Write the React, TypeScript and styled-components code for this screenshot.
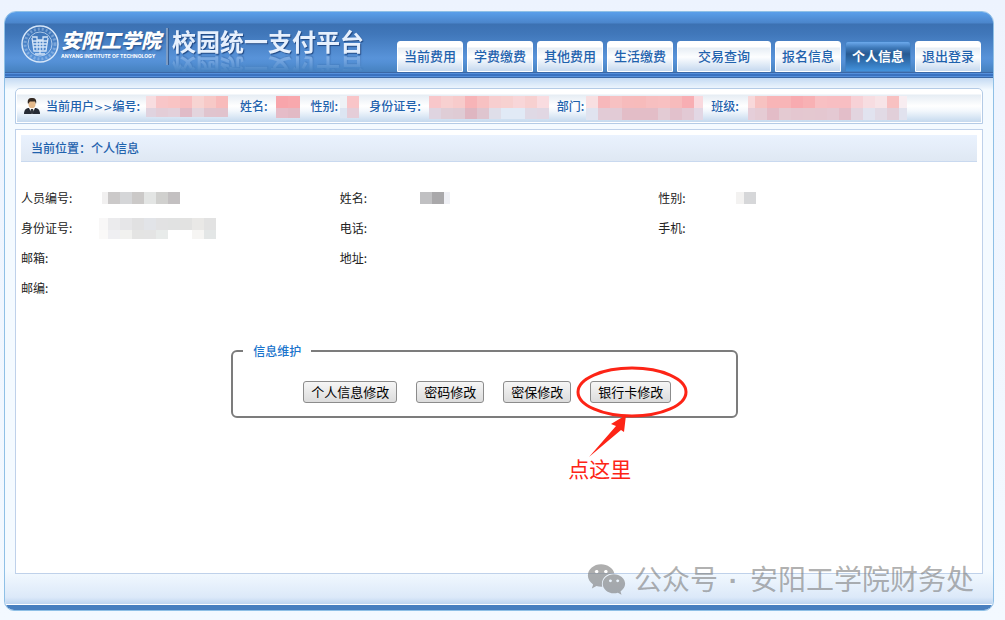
import React from 'react';
import styled, { createGlobalStyle } from 'styled-components';
import { FaWeixin } from 'react-icons/fa';

const GlobalStyle = createGlobalStyle`
  *, *::before, *::after { box-sizing: border-box; }
  body {
    margin: 0;
    background: #f2f8ff linear-gradient(#edf3fe, #f3f9ff) no-repeat;
    font: 12px/18px "Noto Sans CJK SC", "Noto Sans", sans-serif;
    color: #222;
  }
`;

const Shell = styled.div`
  position: relative;
  display: flex;
  flex-direction: column;
  min-height: calc(100vh - 20px);
  margin: 11px 11px 9px 4px;
  border: 1px solid #8fc0e6;
  border-radius: 12px 12px 10px 10px;
  overflow: hidden;
  background: #f4faff;
`;

const Header = styled.header`
  display: flex;
  justify-content: space-between;
  align-items: flex-end;
  padding: 0 12px 0 16px;
  height: 60px;
  background: linear-gradient(#5a9fea 0, #4b85cb 11px, #3c71b2 12px, #4077ba 22px, #5893d9 46px, #5490d6 50px, #4681bf 60px);
`;

const Stripes = styled.div`
  height: 6px;
  flex: none;
  background: linear-gradient(#3b68a6 1px, #5590dc 1px 2px, #3a72c0 2px 4px, #5590dc 4px 5px, #3b68a6 5px);
`;

const Brand = styled.div`
  display: flex;
  align-items: flex-start;
  height: 60px;
  padding-top: 12px;
  color: #fff;
`;

const School = styled.div`
  display: flex;
  flex-direction: column;
  width: 102px;
  margin-left: 2px;
  padding-top: 3px;
  white-space: nowrap;
`;

const SchoolName = styled.span`
  font: italic 900 20px/26px "Noto Sans CJK SC", sans-serif;
  text-shadow: 1px 1px 2px #234f8a;
`;

const SchoolLatin = styled.span`
  font: 700 5px/6px Inter, sans-serif;
`;

const Divider = styled.span`
  width: 3px;
  height: 37px;
  margin: 4px 3px 0;
  background: #7d9cc4;
  border-right: 1px solid #345d94;
`;

const Platform = styled.h1`
  margin: 3px 0 0;
  font: 700 24px/28px "Noto Sans CJK SC", sans-serif;
  color: #e6f0fd;
  white-space: nowrap;
  text-shadow: 1px 1px 1px #1f4680;
  -webkit-box-reflect: below 0px linear-gradient(transparent 40%, rgba(0, 0, 0, 0.3));
`;

const Tabs = styled.nav`
  display: flex;
  gap: 4px;
`;

const Tab = styled.a<{ $active?: boolean; $wide?: boolean }>`
  width: ${p => (p.$wide ? 94 : 66)}px;
  height: 31px;
  border-radius: 3px 3px 0 0;
  border: 1px solid ${p => (p.$active ? '#4482c6' : '#fff')};
  font: 500 13px/28px "Noto Sans CJK SC", sans-serif;
  text-align: center;
  text-decoration: none;
  white-space: nowrap;
  color: ${p => (p.$active ? '#fff' : '#1f62ad')};
  font-weight: ${p => (p.$active ? 700 : 500)};
  background: ${p =>
    p.$active
      ? 'linear-gradient(#6ca9ec, #3d78b8 6px, #285a92 12px, #3273b4 20px, #4392dc)'
      : 'linear-gradient(#fff 5px, #e7eef5 6px, #fdfeff 15px, #c6d9ef)'};
`;

const Main = styled.main`
  display: flex;
  flex-direction: column;
  flex: 1;
  padding: 10px 10px 30px;
  background:
    linear-gradient(#c4daf3, #f4faff) top / 100% 12px no-repeat,
    linear-gradient(#f4faff, #dce9f9 80%, #bed5f0) bottom / 100% 34px no-repeat;
`;

const Footer = styled.footer`
  height: 6px;
  flex: none;
  background: #487fbf;
  border-top: 1px solid #fff;
`;

const UserBar = styled.section`
  display: flex;
  align-items: center;
  height: 36px;
  padding: 0 8px;
  border: 1px solid #b4cbe6;
  border-radius: 5px 5px 0 0;
  box-shadow: inset 0 0 0 1px #fff;
  background: linear-gradient(#fff 5px, #e6edf4 6px, #fff 17px, #f2f7fc 22px, #c5d9ee 33px);
  color: #1f62ad;
  font-weight: 500;
  white-space: nowrap;
`;

const UserItem = styled.span`
  display: flex;
  align-items: center;
  margin: 0 2px 0 6px;

  svg {
    height: 24px;
    margin: 4px 0 0 2px;
  }
`;

const Arrows = styled.span`
  font: 11px/11px "DejaVu Sans", sans-serif;
`;

const Panel = styled.section`
  flex: 1;
  margin-top: 5px;
  padding: 5px;
  border: 1px solid #bfd1ea;
  background: #fff;
`;

const Location = styled.h2`
  margin: 0;
  padding: 0 10px;
  border-bottom: 1px solid #c9d9ef;
  background: linear-gradient(#eaf2fe, #dfe8f3);
  font: 500 12px/26px "Noto Sans CJK SC", sans-serif;
  color: #1f62ad;
`;

const Fields = styled.dl`
  display: grid;
  grid-template-columns: repeat(3, 1fr);
  grid-auto-rows: 30px;
  margin: 21px 0 0;
`;

const Field = styled.div<{ $first?: boolean }>`
  display: flex;
  align-items: center;
  grid-column: ${p => (p.$first ? 1 : 'auto')};

  dt { width: 78px; }
  dd { display: flex; margin: 0; }
`;

const Maintenance = styled.fieldset`
  width: 53%;
  height: 76px;
  margin: 39px 0 0 22%;
  padding: 0 0 0 70px;
  border: 2px solid #7c7c7c;
  border-radius: 6px;

  legend {
    margin-left: -60px;
    padding: 0 10px;
    color: #1a74cc;
    font-weight: 500;
  }
`;

const Actions = styled.div`
  display: flex;
  gap: 19px;
  padding-top: 21px;
`;

const ActionButton = styled.button`
  height: 22px;
  padding: 0 7px;
  border: 1px solid #8c8c8c;
  border-radius: 3px;
  background: linear-gradient(#f6f6f6, #dcdcdc);
  color: #000;
  font: 13px/18px "Noto Sans CJK SC", sans-serif;
  white-space: nowrap;
`;

const Highlighted = styled.span`
  position: relative;
`;

const Callout = styled.span`
  position: absolute;
  left: -15px;
  top: -16px;
  width: 114px;
  pointer-events: none;

  svg { display: block; }
`;

const CalloutText = styled.span`
  position: absolute;
  left: -7px;
  top: 88px;
  font-size: 21px;
  line-height: 30px;
  color: #fd2416;
  white-space: nowrap;
`;

const Watermark = styled.div`
  position: absolute;
  right: 19px;
  bottom: 9px;
  display: flex;
  align-items: center;
  gap: 8px;
  font-size: 28px;
  line-height: 40px;
  white-space: nowrap;
  color: rgba(125, 125, 125, 0.62);
`;

const Dot = styled.span`
  padding: 0 4px 0 3px;
  font-family: "Liberation Sans", sans-serif;
  font-weight: 700;
`;

type MosaicProps = { rows: string[][]; width: number; lead?: number; first?: number; heights?: number[] };

/* Pixelated cover over a private value: 12px cells after an empty lead, the first one may be narrower. */
const Mosaic = ({ rows, width, lead = 0, first = 12, heights = [12, 12] }: MosaicProps) => {
  const total = heights.slice(0, rows.length).reduce((a, b) => a + b, 0);
  return (
    <svg width={width} height={total} shapeRendering="crispEdges" aria-hidden="true">
      {rows.map((row, r) =>
        row.map((fill, c) => (
          <rect
            key={`${r}-${c}`}
            x={lead + (c === 0 ? 0 : first + (c - 1) * 12)}
            y={r === 0 ? 0 : heights[0]}
            width={c === 0 ? first : 12}
            height={heights[r]}
            fill={fill}
          />
        )),
      )}
    </svg>
  );
};

const Emblem = () => (
  <svg width="38" height="40" viewBox="0 0 38 40" fill="none" stroke="#d5e5f8" aria-hidden="true">
    <circle cx="19" cy="20" r="18" strokeWidth="1.5" />
    <circle cx="19" cy="20" r="15" stroke="#a9c8ec" strokeWidth="3" strokeDasharray="2 2" opacity=".5" />
    <circle cx="19" cy="20" r="12" strokeWidth="1" opacity=".7" />
    <path d="M11 13h5v3h6v-3h5M12 17h14M12 20h14M13 23h12M11 14l2 13h12l2-13M16 16v10M19 16v14M22 16v10M14 30h10" strokeWidth="1.3" />
  </svg>
);

const UserIcon = () => (
  <svg width="16" height="17" viewBox="0 0 16 17" aria-hidden="true">
    <path d="M0 16c0-4 2-6 5-6h6c3 0 5 2 5 6z" fill="#262b35" />
    <path d="M5 10l3 6 3-6-1-2H6z" fill="#fff" />
    <path d="M7 11h2l1 3-2 2-2-2z" fill="#30343c" />
    <ellipse cx="8" cy="6" rx="3.5" ry="4.3" fill="#e4b98b" />
    <path d="M4 6C3 1 5 0 8 0s5 1 4 6L11 3.500H6z" fill="#352a22" />
  </svg>
);

const tabs = ['当前费用', '学费缴费', '其他费用', '生活缴费', '交易查询', '报名信息', '个人信息', '退出登录'];

const userItems: { label: React.ReactNode; mosaic: MosaicProps }[] = [
  {
    label: <span>当前用户<Arrows>&gt;&gt;</Arrows>编号:</span>,
    mosaic: {
      width: 90, lead: 4, first: 10, heights: [12, 9],
      rows: [
        ['#f8dde0', '#f8c6c8', '#f9c4c4', '#f8bec0', '#f7d4d2', '#f7c9c7', '#f8bbbb'],
        ['#e0d3df', '#e3cdd7', '#e3d0da', '#e0bbc7', '#e3d4dd', '#e0c4ce', '#e1c3cd'],
      ],
    },
  },
  {
    label: '姓名:',
    mosaic: { width: 33, lead: 6, first: 12, heights: [12, 10], rows: [['#f8a5ab', '#f8a8ad'], ['#e5bcc8', '#e2bac5']] },
  },
  {
    label: '性别:',
    mosaic: { width: 21, first: 7, heights: [12, 10], rows: [['#eef2f6', '#f9c5c8'], ['#dce5f2', '#e5cdd8']] },
  },
  {
    label: '身份证号:',
    mosaic: {
      width: 126, lead: 6, first: 12, heights: [12, 11],
      rows: [
        ['#f8c7ca', '#f7d0d0', '#f7cbcb', '#f7b4b7', '#f7c1c2', '#f7cecf', '#f7d1d0', '#f8d6d8', '#f7d0d0', '#f9dce0'],
        ['#dfd4e0', '#dfcdd6', '#dfcbd4', '#dfb6c1', '#dfc5cf', '#dfdee9', '#e1eaf6', '#e1eaf6', '#dfd9e5', '#e1d7e3'],
      ],
    },
  },
  {
    label: '部门:',
    mosaic: {
      width: 117, first: 12, heights: [12, 12],
      rows: [
        ['#f8dfe1', '#f7b8bb', '#f7c1c2', '#f7bbbc', '#f7bbbb', '#f7bfc0', '#f8c0c1', '#f7bbbc', '#f8aeb3', '#f9d9de'],
        ['#e0e3ef', '#e2cbd6', '#e2cbd6', '#e3bdc7', '#e3bdc7', '#e3bdc7', '#e3cbd4', '#e2c1cc', '#e2c9d4', '#e2d7e4'],
      ],
    },
  },
  {
    label: '班级:',
    mosaic: {
      width: 166, lead: 7, first: 7, heights: [12, 12],
      rows: [
        ['#f8d8da', '#f7c2c1', '#f8b5b7', '#f8b5b7', '#f8abb0', '#f8b1b4', '#f8c0c3', '#f8bec2', '#f8bec2', '#f7d1d6', '#f7dde1', '#f7e4e7', '#f8c1c1', '#f8edf1'],
        ['#e5ced9', '#e5cbd4', '#e3bcc7', '#e4cad2', '#e4c7d0', '#e4c8d0', '#e4c7d0', '#e4c9d3', '#e3bec9', '#e2d4df', '#e1e3ef', '#e1dae5', '#e1cfd9', '#e1e2ee'],
      ],
    },
  },
];

const fields: { label: string; first?: boolean; mosaic?: MosaicProps }[] = [
  { label: '人员编号:', mosaic: { width: 82, lead: 3, first: 6, rows: [['#f1f0f0', '#cbc9c9', '#d5d6d8', '#cbc9c8', '#e3e5e4', '#d0d0ce', '#c3c0c1']] } },
  { label: '姓名:', mosaic: { width: 32, first: 2, rows: [['#fff', '#c0c0c2', '#a9a8aa', '#eff0f5']] } },
  { label: '性别:', mosaic: { width: 20, lead: -4, rows: [['#f3f2f1', '#d6d7d9']] } },
  {
    label: '身份证号:',
    mosaic: {
      width: 117, first: 9, heights: [12, 9],
      rows: [
        ['#f8f7f7', '#ebebed', '#e6e6e8', '#e1e1e2', '#e2e4e8', '#e2e2e3', '#e1e2e2', '#e2e2e1', '#e9e8e6', '#e2e2e2'],
        ['#faf9f8', '#efeff2', '#f1f1ef', '#e4e4e3', '#e4e4e4', '#e8ebea', '#fff', '#fff', '#f6f5f3', '#e3e6e6'],
      ],
    },
  },
  { label: '电话:' },
  { label: '手机:' },
  { label: '邮箱:' },
  { label: '地址:' },
  { label: '邮编:', first: true },
];

export default function App() {
  return (
    <>
      <GlobalStyle />
      <Shell>
        <Header>
          <Brand>
            <Emblem />
            <School>
              <SchoolName>安阳工学院</SchoolName>
              <SchoolLatin>ANYANG INSTITUTE OF TECHNOLOGY</SchoolLatin>
            </School>
            <Divider />
            <Platform>校园统一支付平台</Platform>
          </Brand>
          <Tabs>
            {tabs.map(name => (
              <Tab key={name} href="#" $active={name === '个人信息'} $wide={name === '交易查询'}>
                {name}
              </Tab>
            ))}
          </Tabs>
        </Header>
        <Stripes />
        <Main>
          <UserBar>
            <UserIcon />
            {userItems.map((item, i) => (
              <UserItem key={i}>
                {item.label}
                <Mosaic {...item.mosaic} />
              </UserItem>
            ))}
          </UserBar>
          <Panel>
            <Location>当前位置：个人信息</Location>
            <Fields>
              {fields.map(field => (
                <Field key={field.label} $first={field.first}>
                  <dt>{field.label}</dt>
                  <dd>{field.mosaic && <Mosaic {...field.mosaic} />}</dd>
                </Field>
              ))}
            </Fields>
            <Maintenance>
              <legend>信息维护</legend>
              <Actions>
                <ActionButton type="button">个人信息修改</ActionButton>
                <ActionButton type="button">密码修改</ActionButton>
                <ActionButton type="button">密保修改</ActionButton>
                <Highlighted>
                  <ActionButton type="button">银行卡修改</ActionButton>
                  <Callout>
                    <svg width="114" height="94" viewBox="0 0 114 94" aria-hidden="true">
                      <ellipse cx="57" cy="27" rx="54" ry="24" fill="none" stroke="#fd2416" strokeWidth="3" />
                      <path d="M14 92L41 61L36 59L51 50L49 67L46 65Z" fill="#fd2416" />
                    </svg>
                    <CalloutText>点这里</CalloutText>
                  </Callout>
                </Highlighted>
              </Actions>
            </Maintenance>
          </Panel>
        </Main>
        <Footer />
        <Watermark>
          <FaWeixin size={39} />
          <span>公众号<Dot> · </Dot>安阳工学院财务处</span>
        </Watermark>
      </Shell>
    </>
  );
}
